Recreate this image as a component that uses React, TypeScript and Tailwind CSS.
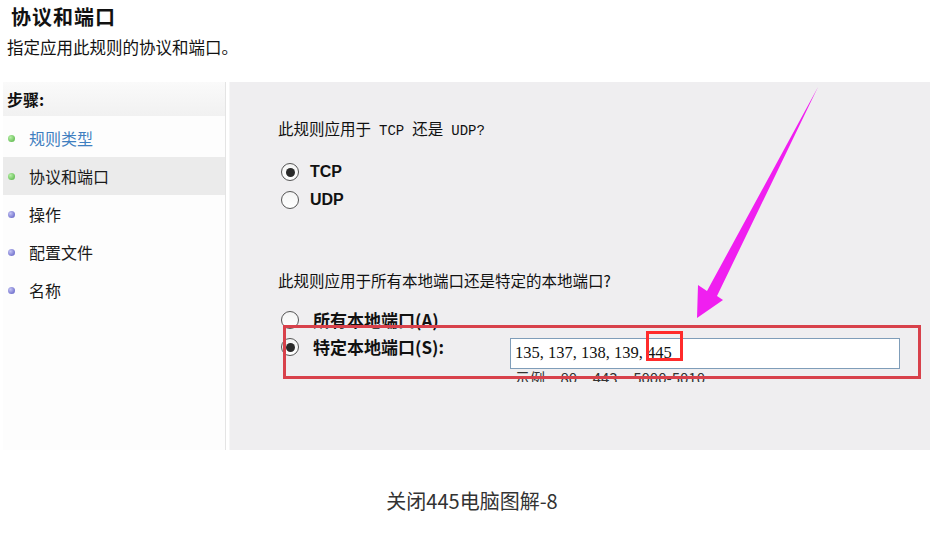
import React from "react";

const cjk = "font-['Noto_Sans_CJK_SC','Liberation_Sans',sans-serif]";

type Step = { label: string; done: boolean; current?: boolean; link?: boolean };

const STEPS: Step[] = [
  { label: "规则类型", done: true, link: true },
  { label: "协议和端口", done: true, current: true },
  { label: "操作", done: false },
  { label: "配置文件", done: false },
  { label: "名称", done: false },
];

function Bullet({ done }: { done: boolean }) {
  return (
    <span
      className={
        done
          ? "h-[7px] w-[7px] rounded-full bg-[radial-gradient(circle_at_35%_35%,#b8f0a8,#4cae3c)]"
          : "h-[7px] w-[7px] rounded-full bg-[radial-gradient(circle_at_35%_35%,#c4c4f4,#5656c0)]"
      }
    />
  );
}

function Radio({ checked }: { checked?: boolean }) {
  return (
    <span className="flex h-[18px] w-[18px] shrink-0 items-center justify-center rounded-full border-[1.5px] border-[#555] bg-[linear-gradient(#f4f4f4,#ffffff)]">
      {checked && <span className="h-[9px] w-[9px] rounded-full bg-[#2a2a2a]" />}
    </span>
  );
}

export default function App() {
  return (
    <div className={`relative h-[538px] w-[944px] overflow-hidden bg-white text-[#111] ${cjk}`}>
      {/* page heading */}
      <div className="pl-[11px] pt-[3px]">
        <h1 className="text-[20px] font-bold leading-[28px] tracking-[1px]">协议和端口</h1>
        <p className="-ml-[4px] mt-[5px] text-[16.5px] leading-[22px]">指定应用此规则的协议和端口。</p>
      </div>

      {/* wizard body */}
      <div className="ml-[3px] mt-[24px] flex h-[368px] w-[927px]">
        <div className="flex w-[223px] flex-col border-r border-[#e4e4e4] bg-[#fdfdfd]">
          <div className="flex h-[34px] items-center bg-[linear-gradient(#fafafa,#f1f1f1)] pl-[4px] text-[16px] font-bold">
            步骤:
          </div>
          <div className="mt-[3px] flex flex-col">
            {STEPS.map((s) => (
              <div
                key={s.label}
                className={`flex h-[38px] items-center gap-[14px] pl-[5px] text-[16px] ${s.current ? "bg-[#ebebeb]" : ""}`}
              >
                <Bullet done={s.done} />
                <span className={s.link ? "text-[#3f7fc0]" : "text-[#1a1a1a]"}>{s.label}</span>
              </div>
            ))}
          </div>
        </div>

        <div className="ml-[3px] border-l border-[#f6f6f6]" />

        <div className="relative flex-1 bg-[#efeef0] pl-[48px] pt-[36px]">
          <p className="text-[15.5px] leading-[20px]">
            此规则应用于
            <span className="mx-[8px] font-['Liberation_Mono',monospace] text-[14px]">TCP</span>
            还是
            <span className="ml-[8px] font-['Liberation_Mono',monospace] text-[14px]">UDP?</span>
          </p>

          <div className="mt-[17px] flex flex-col">
            <label className="flex h-[28px] items-center gap-[11px] pl-[3px]">
              <Radio checked />
              <span className="font-['Liberation_Sans',sans-serif] text-[16px] font-bold">TCP</span>
            </label>
            <label className="flex h-[28px] items-center gap-[11px] pl-[3px]">
              <Radio />
              <span className="font-['Liberation_Sans',sans-serif] text-[16px] font-bold">UDP</span>
            </label>
          </div>

          <p className="mt-[56px] text-[15.5px] leading-[20px]">此规则应用于所有本地端口还是特定的本地端口?</p>

          <label className="mt-[16px] flex h-[28px] items-center gap-[14px] pl-[3px]">
            <Radio />
            <span className="text-[17px] font-bold">所有本地端口(A)</span>
          </label>

          <div className="flex items-start">
            <label className="flex h-[26px] w-[232px] shrink-0 items-center gap-[14px] pl-[3px]">
              <Radio checked />
              <span className="text-[17px] font-bold">特定本地端口(S):</span>
            </label>
            <div className="flex flex-col">
              <div className="mt-[4px] flex h-[31px] w-[390px] items-center border border-[#7f9db9] bg-white pl-[4px] font-['Liberation_Serif',serif] text-[16.5px]">
                135, 137, 138, 139, 445
              </div>
              <div className="h-[13px] overflow-hidden pl-[5px] text-[15px] leading-[18px] text-[#333] [word-spacing:8px]">
                示例: 80, 443, 5000-5010
              </div>
            </div>
          </div>

          {/* annotation boxes */}
          <div className="absolute left-[53px] top-[243px] h-[54px] w-[638px] border-[3px] border-[#d8414b]" />
          <div className="absolute left-[416px] top-[249px] h-[30px] w-[37px] border-[3px] border-[#ff2b2b]" />
        </div>
      </div>

      <p className="mt-[38px] text-center text-[20px] leading-[26px] text-[#333]">关闭445电脑图解-8</p>

      {/* annotation arrow */}
      <svg className="pointer-events-none absolute left-0 top-0" width="944" height="538">
        <polygon points="818,87 717,296 723,300 697,318 698,285 707,291" fill="#f01ff0" />
      </svg>
    </div>
  );
}
